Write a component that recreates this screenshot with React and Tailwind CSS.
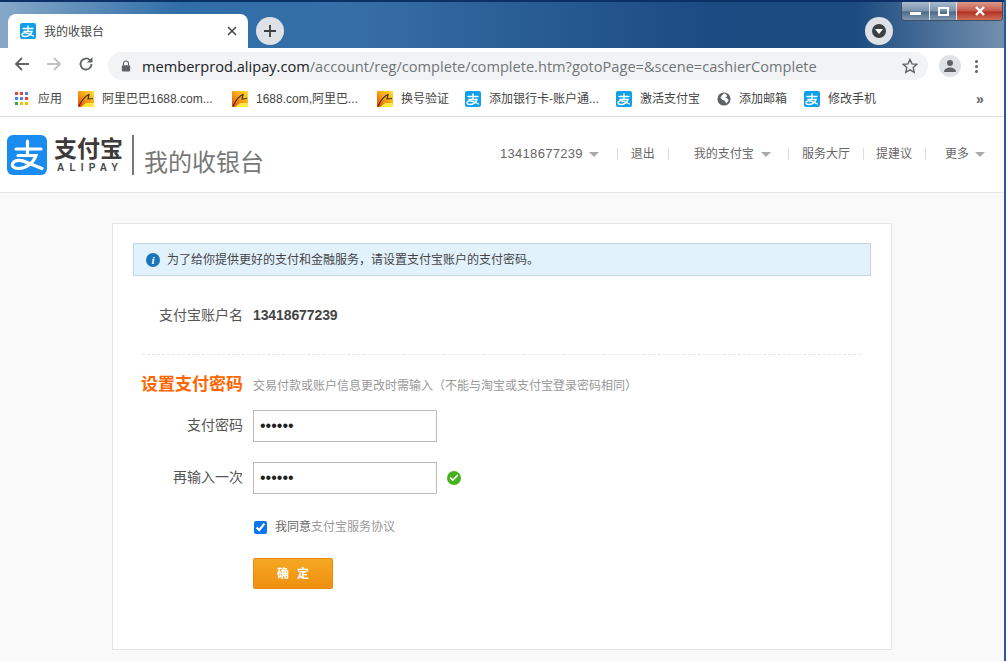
import { Check } from "lucide-react";

const AlipayIcon = ({ className }) => (
    <svg viewBox="0 0 40 40" className={className}>
        <rect width="40" height="40" rx="6" fill="#1a8cf0" />
        <g fill="none" stroke="#fff" strokeWidth="3.2" strokeLinecap="round">
            <path d="M9 14h25" />
            <path d="M20.500 6v13" />
            <path d="M11 20.500h18c-2.500 7-9 12.500-17 13-6 .3-7.500-3-6-5.500 2-3.500 8-3.500 14-.5l15 6" />
        </g>
    </svg>
);

const SmallAlipay = () => (
    <svg viewBox="0 0 16 16" className="w-4 h-4 shrink-0">
        <rect width="16" height="16" rx="2" fill="#0ea0ea" />
        <g fill="none" stroke="#fff" strokeWidth="1.4" strokeLinecap="round">
            <path d="M3 5.500h10M8 3v5M4 8.500h8c-1 3-4 5-7.500 5-2.500 0-3-2-2-3 1.500-1.300 4.500-.8 11 2.500" />
        </g>
    </svg>
);

const Fav1688 = () => (
    <svg viewBox="0 0 16 16" className="w-4 h-4 shrink-0">
        <defs>
            <linearGradient id="fav" x1="0" y1="1" x2="1" y2="0">
                <stop offset="0" stopColor="#e8420f" />
                <stop offset="0.5" stopColor="#f8a011" />
                <stop offset="1" stopColor="#ffe43a" />
            </linearGradient>
        </defs>
        <rect width="16" height="16" fill="url(#fav)" />
        <path d="M1 15C4 9 7 5 11 3.500L10 8l5-.5" fill="none" stroke="#3a2a10" strokeWidth="1.1" />
        <path d="M8 12h8v4H3z" fill="#ffe93d" />
    </svg>
);

const AppsIcon = () => {
    const colors = ["#ea4335", "#ea4335", "#4285f4", "#4285f4", "#4285f4", "#ea4335", "#34a853", "#fbbc04", "#fbbc04"];
    return (
        <div className="grid grid-cols-3 gap-[2px] w-[13px] shrink-0">
            {colors.map((c, i) => (
                <span key={i} className="w-[3px] h-[3px]" style={{ background: c }} />
            ))}
        </div>
    );
};

const GlobeIcon = () => (
    <svg viewBox="0 0 16 16" className="w-[14px] h-[14px] shrink-0">
        <circle cx="8" cy="8" r="7.500" fill="#5f6368" />
        <path d="M8 1.500 11 3l.5 2-2 1.500 2.500 1 1.500 2-3 3.500-1.500-3L6.500 9 4 6.500 5.500 4z" fill="#fff" />
    </svg>
);

const Caret = ({ className }) => <span className={`w-0 h-0 border-x-[5px] border-x-transparent border-t-[5px] border-t-[#aaa] shrink-0 ${className}`} />;
const Sep = ({ className }) => <span className={`w-px h-3 bg-[#ddd] shrink-0 ${className}`} />;

const bookmarks = [
    { icon: <Fav1688 />, text: "阿里巴巴1688.com...", w: "w-[154px]" },
    { icon: <Fav1688 />, text: "1688.com,阿里巴...", w: "w-[145px]" },
    { icon: <Fav1688 />, text: "换号验证", w: "w-[88px]" },
    { icon: <SmallAlipay />, text: "添加银行卡-账户通...", w: "w-[151px]" },
    { icon: <SmallAlipay />, text: "激活支付宝", w: "w-[101px]" },
    { icon: <GlobeIcon />, text: "添加邮箱", w: "w-[87px]" },
    { icon: <SmallAlipay />, text: "修改手机", w: "w-[88px]" },
];

const Browser = () => (
    <div className="shrink-0">
        <div className="relative h-[48px] border-t-2 border-[#0b2f66] bg-[linear-gradient(90deg,#86a8c8_0%,#2f6ea8_18%,#366fa6_35%,#1b4b82_70%,#1b4a80_85%,#7490ae_100%)] flex items-end pl-2">
            <div className="w-[240px] h-[34px] bg-white rounded-t-lg flex items-center pl-3 pr-[11px]">
                <SmallAlipay />
                <span className="ml-2 mt-[2px] text-xs text-[#444]">我的收银台</span>
                <svg viewBox="0 0 10 10" className="w-[10px] h-[10px] ml-auto">
                    <path d="M1 1l8 8M9 1l-8 8" stroke="#444" strokeWidth="1.500" />
                </svg>
            </div>
            <div className="ml-2 mb-[3px] w-7 h-7 rounded-full bg-[#dee1e6] flex items-center justify-center">
                <svg viewBox="0 0 14 14" className="w-[14px] h-[14px]">
                    <path d="M7 1v12M1 7h12" stroke="#3c4043" strokeWidth="1.800" />
                </svg>
            </div>
            <div className="ml-auto mr-[111px] mb-[3px] w-7 h-7 rounded-full bg-[#dee1e6] flex items-center justify-center">
                <div className="w-[14px] h-[14px] rounded-full bg-[#3c4043] flex items-center justify-center">
                    <span className="w-0 h-0 border-x-[4px] border-x-transparent border-t-[5px] border-t-white" />
                </div>
            </div>
            {/* window buttons sit on top of the title bar */}
            <div className="absolute right-[1px] top-0 w-[102px] h-[19px] flex rounded-b border border-t-0 border-[#3c4f66] overflow-hidden">
                <div className="w-[28px] border-r border-[#dfe6ee] bg-[linear-gradient(180deg,#a9bccf,#7b92ab_50%,#4d6a88_55%,#7f98b0)] flex items-center justify-center">
                    <span className="w-[11px] h-[3px] bg-white mt-[5px]" />
                </div>
                <div className="w-[27px] border-r border-[#dfe6ee] bg-[linear-gradient(180deg,#a9bccf,#7b92ab_50%,#4d6a88_55%,#7f98b0)] flex items-center justify-center">
                    <span className="w-[11px] h-[9px] border-2 border-white" />
                </div>
                <div className="flex-1 bg-[linear-gradient(180deg,#d99a8c,#c4574a_50%,#b23020_55%,#d0705c)] flex items-center justify-center">
                    <svg viewBox="0 0 12 10" className="w-[12px] h-[10px]">
                        <path d="M2 1l8 8M10 1l-8 8" stroke="#fff" strokeWidth="2.400" />
                    </svg>
                </div>
            </div>
        </div>
        <div className="h-[32px] bg-white flex items-center">
            <svg viewBox="0 0 16 16" className="ml-[14px] w-4 h-4">
                <path d="M15 8H2M8 2 2 8l6 6" fill="none" stroke="#5f6368" strokeWidth="1.800" />
            </svg>
            <svg viewBox="0 0 16 16" className="ml-4 w-4 h-4">
                <path d="M1 8h13M8 2l6 6-6 6" fill="none" stroke="#bdc1c6" strokeWidth="1.800" />
            </svg>
            <svg viewBox="0 0 16 16" className="ml-4 w-4 h-4">
                <path d="M13.500 8a5.500 5.500 0 1 1-1.600-3.900" fill="none" stroke="#5f6368" strokeWidth="1.800" />
                <path d="M14.500 1v5.500H9z" fill="#5f6368" />
            </svg>
            <div className="ml-[14px] w-[820px] h-[28px] mt-[4px] rounded-full bg-[#f1f3f4] flex items-center pl-[13px] pr-[10px]">
                <svg viewBox="0 0 12 14" className="w-[10px] h-[12px]">
                    <path d="M3 6V4a3 3 0 0 1 6 0v2" fill="none" stroke="#5f6368" strokeWidth="1.300" />
                    <rect x="1" y="6" width="10" height="7.500" rx="1" fill="#5f6368" />
                </svg>
                <span className="ml-[11px] mt-[1px] text-[14.6px] text-[#70757a] font-['Open_Sans',sans-serif]">
                    <span className="text-[#202124]">memberprod.alipay.com</span>/account/reg/complete/complete.htm?gotoPage=&amp;scene=cashierComplete
                </span>
                <svg viewBox="0 0 16 16" className="ml-auto w-4 h-4">
                    <path d="M8 1.500l2 4.400 4.700.5-3.500 3.200 1 4.700L8 11.900l-4.200 2.400 1-4.700L1.300 6.400 6 5.900z" fill="none" stroke="#5f6368" strokeWidth="1.400" />
                </svg>
            </div>
            <div className="ml-[11px] w-[22px] h-[22px] mt-[4px] rounded-full bg-[#dee1e6] flex items-center justify-center">
                <svg viewBox="0 0 14 14" className="w-[14px] h-[14px]">
                    <circle cx="7" cy="4" r="3" fill="#5f6368" />
                    <path d="M1 13c0-3 3-4.500 6-4.500s6 1.500 6 4.500z" fill="#5f6368" />
                </svg>
            </div>
            <div className="ml-[14px] mt-[4px] flex flex-col gap-[2px]">
                <span className="w-[3px] h-[3px] rounded-full bg-[#5f6368]" />
                <span className="w-[3px] h-[3px] rounded-full bg-[#5f6368]" />
                <span className="w-[3px] h-[3px] rounded-full bg-[#5f6368]" />
            </div>
        </div>
        <div className="h-[37px] pt-[1px] bg-white border-b border-[#dadce0] flex items-center pl-[15px] text-xs text-[#444]">
            <div className="w-[63px] flex items-center gap-[10px]">
                <AppsIcon />
                <span>应用</span>
            </div>
            {bookmarks.map((b) => (
                <div key={b.text} className={`${b.w} flex items-center gap-2 whitespace-nowrap`}>
                    {b.icon}
                    <span>{b.text}</span>
                </div>
            ))}
            <span className="ml-[84px] text-sm font-bold text-[#5f6368]">»</span>
        </div>
    </div>
);

const SiteHeader = () => (
    <div className="shrink-0 h-[76px] bg-white border-b border-[#e5e5e5] flex pl-[7px]">
        <div className="flex mt-[18px] h-[40px]">
            <AlipayIcon className="w-10 h-10" />
            <div className="ml-[7px] w-[70px] flex flex-col">
                <span className="mt-[1px] text-[23px] leading-[27px] font-bold text-[#3d3a39] whitespace-nowrap">支付宝</span>
                <span className="ml-[3px] text-[10px] leading-[10px] font-bold tracking-[5.2px] text-[#4a4a4a]">ALIPAY</span>
            </div>
            <span className="ml-[8px] w-[2px] h-10 bg-[#777]" />
            <span className="ml-[10px] mt-[10px] text-2xl leading-[36px] text-[#777]">我的收银台</span>
        </div>
        <div className="ml-[236px] mt-[29px] h-4 flex items-center text-xs text-[#666]">
            <span className="text-[13px] tracking-[0.3px]">13418677239</span>
            <Caret className="ml-[6px]" />
            <Sep className="ml-[18px]" />
            <span className="ml-[13px]">退出</span>
            <Sep className="ml-[13px]" />
            <span className="ml-[25px]">我的支付宝</span>
            <Caret className="ml-[7px]" />
            <Sep className="ml-[17px]" />
            <span className="ml-[13px]">服务大厅</span>
            <Sep className="ml-[13px]" />
            <span className="ml-[12px]">提建议</span>
            <Sep className="ml-[13px]" />
            <span className="ml-[19px]">更多</span>
            <Caret className="ml-[6px]" />
        </div>
    </div>
);

const Field = ({ label, ok }) => (
    <div className="flex items-center h-8">
        <label className="w-[110px] mb-[2px] text-right text-sm text-[#555]">{label}</label>
        <input
            type="password"
            defaultValue="123456"
            className="ml-[10px] w-[184px] h-8 border border-[#bbb] px-[6px] text-base text-[#222] font-['Liberation_Sans',sans-serif] outline-none"
        />
        {ok && (
            <span className="ml-[10px] w-[14px] h-[14px] rounded-full bg-[#45b31b] flex items-center justify-center">
                <Check className="w-[10px] h-[10px] text-white" strokeWidth={4} />
            </span>
        )}
    </div>
);

const App = () => {
    return (
        <div className="w-[1006px] h-[661px] overflow-hidden flex flex-col border-r-2 border-[#2a5a90] bg-[#f9f9f9] font-['Liberation_Sans','Noto_Sans_CJK_SC',sans-serif]">
            <Browser />
            <SiteHeader />
            <div className="flex-1 pl-[112px] pt-[30px]">
                <div className="w-[780px] h-[427px] bg-white border border-[#e5e5e5] px-5 pt-[19px]">
                    <div className="h-[33px] bg-[#e2f2fc] border border-[#c7d6e3] flex items-center pl-3 text-xs text-[#444]">
                        <span className="w-[14px] h-[14px] rounded-full bg-[#1a75bb] text-white text-[11px] leading-[14px] text-center font-bold italic font-['Liberation_Serif',serif]">i</span>
                        <span className="ml-[7px]">为了给你提供更好的支付和金融服务，请设置支付宝账户的支付密码。</span>
                    </div>
                    <div className="flex items-center mt-[29px] h-5">
                        <span className="w-[110px] text-right text-sm text-[#555]">支付宝账户名</span>
                        <span className="ml-[10px] text-[14px] tracking-[-0.1px] font-bold text-[#444]">13418677239</span>
                    </div>
                    <div className="ml-[9px] mr-[10px] mt-[29px] border-t border-dashed border-[#e5e5e5]" />
                    <div className="flex items-center mt-[20px] h-5">
                        <span className="w-[110px] text-right text-[17px] font-bold text-[#f60] whitespace-nowrap">设置支付密码</span>
                        <span className="ml-[10px] mt-[1px] text-xs text-[#999]">交易付款或账户信息更改时需输入（不能与淘宝或支付宝登录密码相同）</span>
                    </div>
                    <div className="mt-[15px] flex flex-col gap-5">
                        <Field label="支付密码" />
                        <Field label="再输入一次" ok />
                    </div>
                    <label className="ml-[120px] mt-[25px] mb-[-1px] flex items-center h-4 text-xs">
                        <input type="checkbox" defaultChecked className="m-0 ml-[1px] w-[13px] h-[13px] accent-[#0a75f0]" />
                        <span className="ml-2 text-[#666]">我同意</span>
                        <span className="text-[#999]">支付宝服务协议</span>
                    </label>
                    <button className="ml-[120px] mt-[24px] w-20 h-[31px] rounded-[2px] border border-[#e58a12] bg-[linear-gradient(180deg,#f6a823,#ef900f)] text-white text-xs font-bold tracking-[8px] pl-2">
                        确定
                    </button>
                </div>
            </div>
        </div>
    );
};

export default App;
